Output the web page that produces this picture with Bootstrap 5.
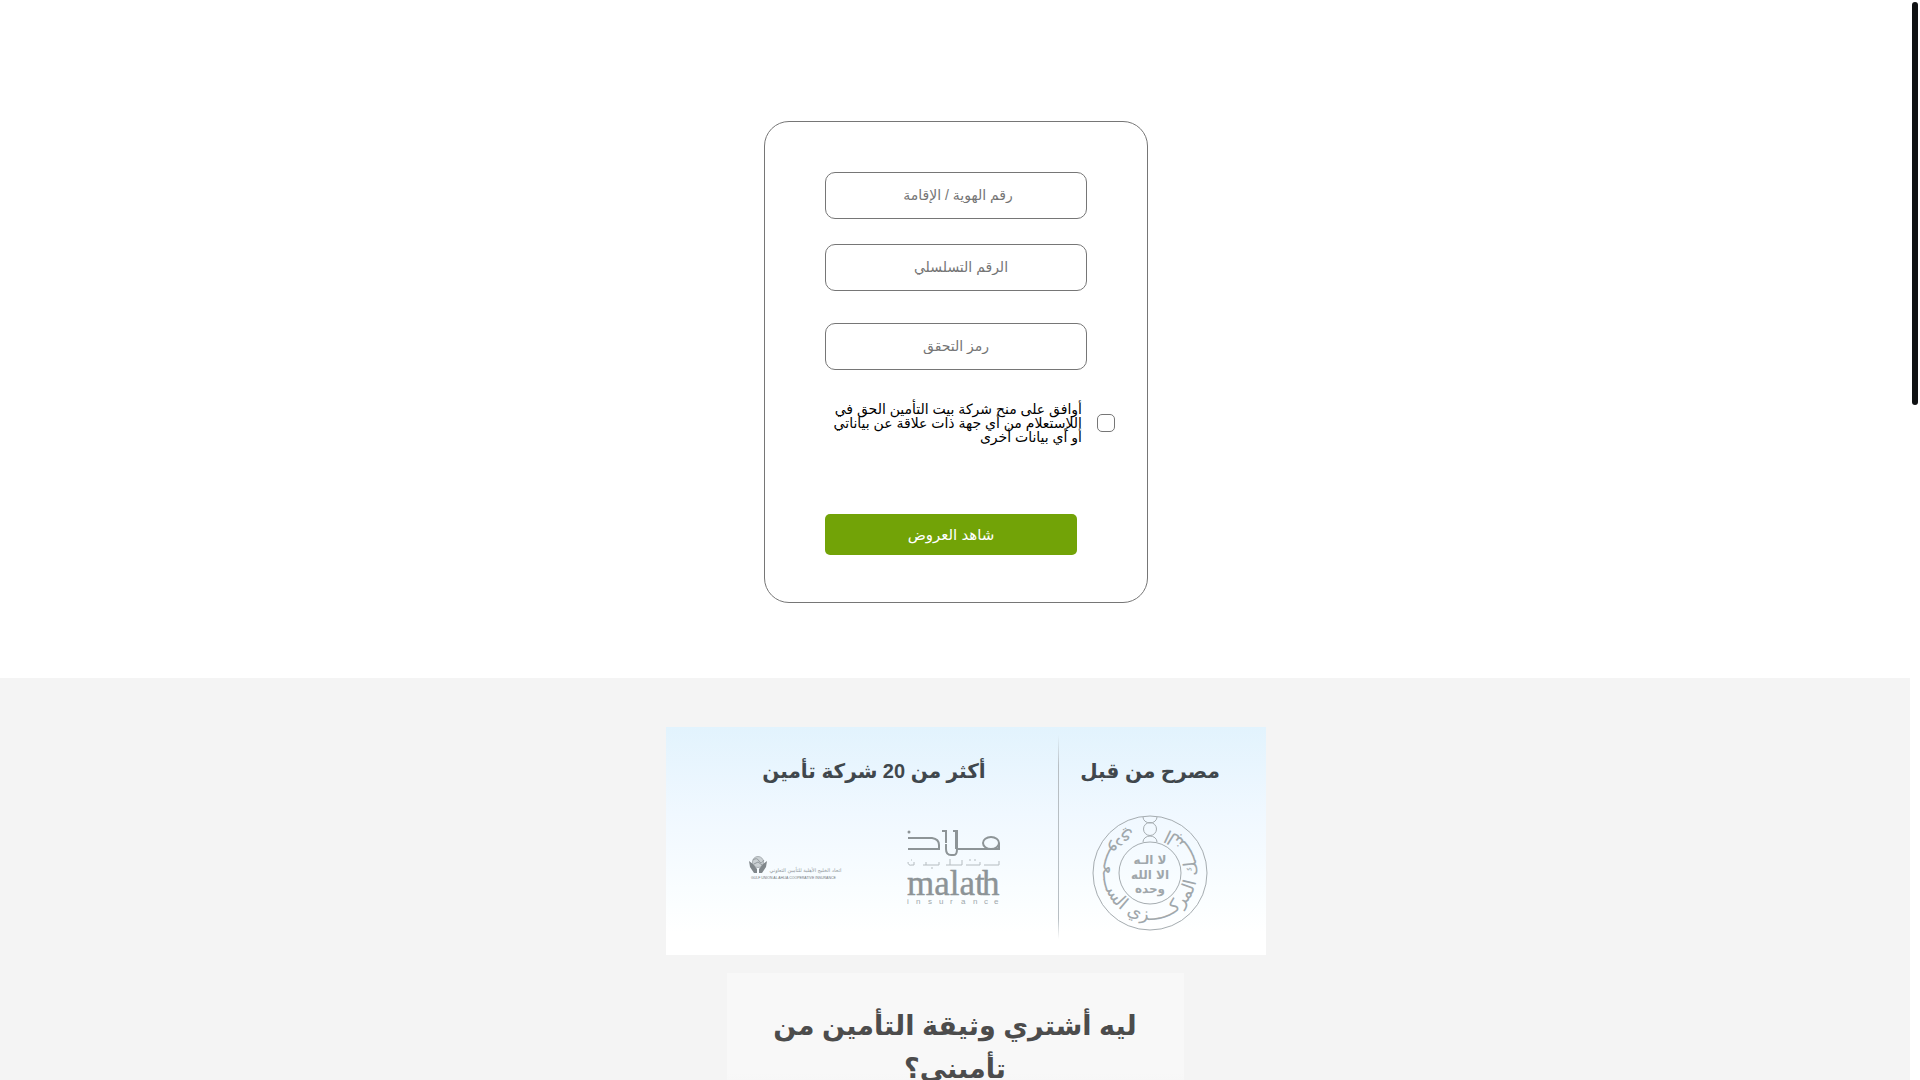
<!DOCTYPE html>
<html lang="ar" dir="rtl">
<head>
<meta charset="utf-8">
<meta name="viewport" content="width=device-width, initial-scale=1">
<title>تأميني</title>
<link href="https://cdn.jsdelivr.net/npm/bootstrap@5.3.0/dist/css/bootstrap.min.css" rel="stylesheet">
<style>
body { font-family: "Liberation Sans", "DejaVu Sans", sans-serif; color: #000; background: #fff; }
.page { height: 100vh; padding-right: 10px; }
.scroll-thumb { top: 2px; right: 2px; width: 6px; height: 403px; background: #0f1112; }
.quote-area { padding: 121px 0 75px 2px; }
.quote-form { width: 384px; padding: 50px 32px 47px 60px; border: 1px solid #767676; border-radius: 25px; }
.quote-fields { width: 262px; }
.quote-input { height: 47px; border: 1px solid #767676; border-radius: 10px; font-size: 14px; padding: 0 12px 2px; text-align: center; }
.quote-input::placeholder { color: #757575; }
.first-gap { margin-bottom: 25px; padding-left: 16px; }
.wide-gap { margin-bottom: 32px; }
.nudged { padding-left: 22px; }
.consent { margin-bottom: 70px; gap: 15px; }
.consent label { font-size: 14px; line-height: 14px; width: 257px; }
.consent .form-check-input { width: 18px; height: 18px; border: 1px solid #767676; border-radius: 5px; }
.offers-btn, .offers-btn:hover { width: 252px; height: 41px; background: #72a307; color: #fff; border: 0; border-radius: 5px; font-size: 15px; padding: 2px 0 0; }
.info-area { background: #f4f4f4; padding-top: 49px; }
.partners { width: 600px; height: 228px; margin-left: 22px; background: linear-gradient(#e2f3fd, #f0f8ff 38%, #fbfeff 78%, #fff 90%); color: #40474c; }
.partners h2 { font-size: 20px; line-height: 32px; font-weight: 700; margin: 28px 0 0; }
.approved { width: 208px; padding-right: 24px; }
.companies { width: 392px; padding-left: 24px; }
.divider { left: 392px; top: 8px; width: 1px; height: 204px; background: linear-gradient(transparent, #b7bec3 15%, #b7bec3 90%, transparent); }
.logo-row { gap: 65px; margin-top: 43px; }
.seal { margin-top: 27px; }
.why { width: 457px; margin-top: 18px; padding-top: 32px; background: linear-gradient(#f8f8f8, #f8f8f8 100px, #f4f4f4 130px); color: #4c4c4c; }
.why h1 { font-size: 27px; line-height: 43px; font-weight: 700; margin: 0; }
</style>
<script src="https://cdn.jsdelivr.net/npm/bootstrap@5.3.0/dist/js/bootstrap.bundle.min.js"></script>
</head>
<body>
<div class="page d-flex flex-column overflow-hidden position-relative">
  <div class="scroll-thumb position-absolute rounded-pill"></div>
  <main class="quote-area d-flex justify-content-center">
    <form class="quote-form">
      <div class="quote-fields me-auto d-flex flex-column">
        <input class="form-control quote-input first-gap" type="text" aria-label="رقم الهوية / الإقامة" placeholder="رقم الهوية / الإقامة">
        <input class="form-control quote-input wide-gap nudged" type="text" aria-label="الرقم التسلسلي" placeholder="الرقم التسلسلي">
        <input class="form-control quote-input wide-gap" type="text" aria-label="رمز التحقق" placeholder="رمز التحقق">
      </div>
      <div class="consent d-flex align-items-center">
        <input class="form-check-input m-0 flex-shrink-0" type="checkbox" id="agree">
        <label for="agree">أوافق على منح شركة بيت التأمين الحق في اللإستعلام من أي جهة ذات علاقة عن بياناتي أو أي بيانات أخرى</label>
      </div>
      <button type="submit" class="btn offers-btn d-block me-auto">شاهد العروض</button>
    </form>
  </main>
  <section class="info-area flex-grow-1 d-flex flex-column align-items-center">
    <div class="partners d-flex flex-shrink-0 position-relative">
      <div class="divider position-absolute"></div>
      <div class="approved d-flex flex-column align-items-center">
        <h2>مصرح من قبل</h2>
        <svg class="seal" width="118" height="118" viewBox="-59 -59 118 118" fill="none" stroke="#a5acb0" direction="rtl">
          <circle r="57"/><circle r="31"/>
          <circle cy="-44" r="6.500"/>
          <path d="M-7 -56A7 6 0 0 0 7 -56M-7 -31A7 6 0 0 1 7 -31"/>
          <path id="ring" stroke="none" d="M-10 -46A47 47 0 1 0 10 -46"/>
          <g fill="#a0a7ab" stroke="none" font-family="DejaVu Sans" text-anchor="middle">
            <text font-size="18"><textPath href="#ring" startOffset="50%">البنــــك المركـــــزي الســـعـــودي</textPath></text>
            <g font-size="12" font-weight="700">
              <text y="-9">لا الـه</text>
              <text y="6">الا الله</text>
              <text y="20">وحده</text>
            </g>
          </g>
        </svg>
      </div>
      <div class="companies d-flex flex-column align-items-center">
        <h2>أكثر من 20 شركة تأمين</h2>
        <div class="logo-row d-flex align-items-center">
          <svg width="93" height="76" viewBox="0 0 93 76" direction="ltr">
            <g fill="none" stroke="#8d9497" stroke-width="2">
              <path d="M1 8H25Q32 9 32 15V20M1 19H32M35 1H39V13M46 1H50V19H92V13M39 14V19Q39 25 44 25H47Q50 25 50 19M49 1V19M92 19V14"/>
              <ellipse cx="84" cy="13" rx="8" ry="6"/>
            </g>
            <circle cx="2" cy="2" r="1.500" fill="#8d9497"/>
            <g fill="none" stroke="#b5bcc0"><path d="M1 32Q1 36 5 35H7V32M16 35H32V32M39 35H55V30M59 35H73V32M77 35H92V31M19 35V32M43 35V29"/><path d="M4 30h1M24 38h2M62 30h2M67 30h2"/></g>
            <text x="0" y="65" font-family="Liberation Serif" font-size="35" fill="#8d9497" stroke="#8d9497" stroke-width=".4">malat<tspan x="75">h</tspan></text>
            <text x="0 9 21 32 43 54 66 77 87" y="74" font-family="Liberation Sans" font-size="8" fill="#a0a7ab">insurance</text>
          </svg>
          <svg width="93" height="24" viewBox="0 0 186 48" direction="ltr">
            <g transform="scale(2)">
              <circle cx="9" cy="6" r="5.500" fill="#cbd1d4" stroke="#aab0b4"/>
              <path d="M4 4Q8 1 10 5T15 4M5 8L9 6L13 9" fill="none" stroke="#949b9f"/>
              <path d="M0 5L4 8L8 13V17H5L1 11ZM18 5L14 8L10 13V17H13L17 11Z" fill="#80878b"/>
            </g>
            <text x="185" y="32" direction="rtl" font-family="DejaVu Sans" font-size="10" fill="#90979b">اتحاد الخليج الأهلية للتأمين التعاوني</text>
            <text x="4" y="45" font-family="Liberation Sans" font-size="7" fill="#70777b">GULF UNION AL AHLIA COOPERATIVE INSURANCE</text>
          </svg>
        </div>
      </div>
    </div>
    <div class="why flex-grow-1 text-center">
      <h1>ليه أشتري وثيقة التأمين من<br>تأميني؟</h1>
    </div>
  </section>
</div>
</body>
</html>
